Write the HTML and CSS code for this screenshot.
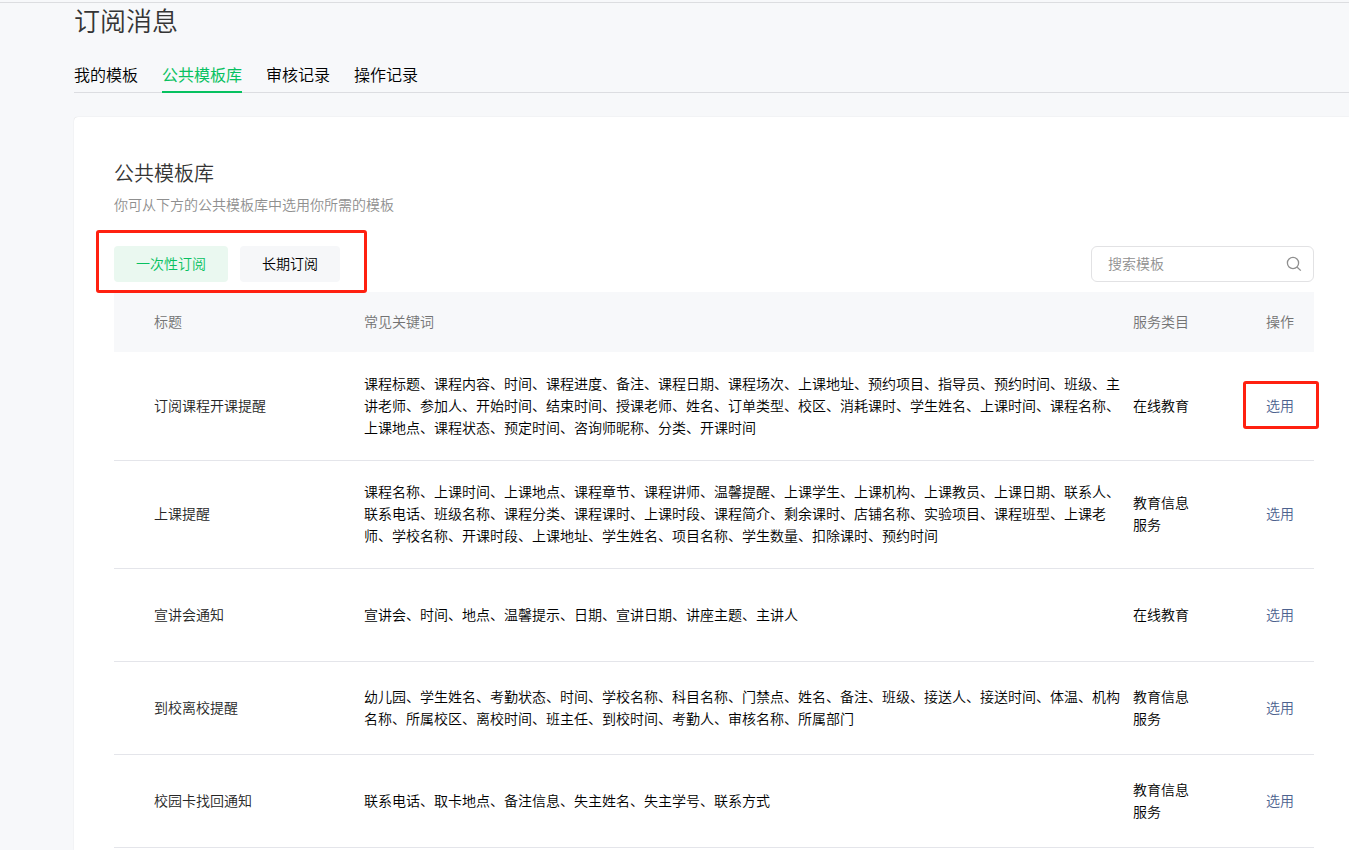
FILE: index.html
```html
<!DOCTYPE html>
<html lang="zh-CN">
<head>
<meta charset="utf-8">
<meta name="viewport" content="width=device-width, initial-scale=1">
<title>订阅消息</title>
<link rel="stylesheet" href="styles.css">
</head>
<body>
<main class="page">
  <h1 class="page-title">订阅消息</h1>
  <nav class="tabs">
    <a class="tab" href="#mine">我的模板</a>
    <a class="tab tab-active" href="#library" aria-current="page">公共模板库</a>
    <a class="tab" href="#review">审核记录</a>
    <a class="tab" href="#history">操作记录</a>
  </nav>
  <section class="card">
    <h2 class="card-title">公共模板库</h2>
    <p class="card-desc">你可从下方的公共模板库中选用你所需的模板</p>
    <div class="toolbar">
      <div class="types marked">
        <button class="type type-active" type="button">一次性订阅</button>
        <button class="type" type="button">长期订阅</button>
      </div>
      <form class="search">
        <input class="search-input" type="text" placeholder="搜索模板" aria-label="搜索模板">
        <button class="search-button" type="submit" aria-label="搜索">
          <svg class="search-icon" viewBox="0 0 16 16" aria-hidden="true"><circle cx="7" cy="7" r="5.6"/><path d="M11.2 11.2l3.6 3.4"/></svg>
        </button>
      </form>
    </div>
    <table class="table">
      <colgroup><col class="col-title"><col><col class="col-category"><col class="col-action"></colgroup>
      <thead>
        <tr><th>标题</th><th>常见关键词</th><th>服务类目</th><th>操作</th></tr>
      </thead>
      <tbody>
        <tr>
          <td>订阅课程开课提醒</td>
          <td>课程标题、课程内容、时间、课程进度、备注、课程日期、课程场次、上课地址、预约项目、指导员、预约时间、班级、主讲老师、参加人、开始时间、结束时间、授课老师、姓名、订单类型、校区、消耗课时、学生姓名、上课时间、课程名称、上课地点、课程状态、预定时间、咨询师昵称、分类、开课时间</td>
          <td>在线教育</td>
          <td><a class="pick marked" href="#pick">选用</a></td>
        </tr>
        <tr>
          <td>上课提醒</td>
          <td>课程名称、上课时间、上课地点、课程章节、课程讲师、温馨提醒、上课学生、上课机构、上课教员、上课日期、联系人、联系电话、班级名称、课程分类、课程课时、上课时段、课程简介、剩余课时、店铺名称、实验项目、课程班型、上课老师、学校名称、开课时段、上课地址、学生姓名、项目名称、学生数量、扣除课时、预约时间</td>
          <td>教育信息服务</td>
          <td><a class="pick" href="#pick">选用</a></td>
        </tr>
        <tr>
          <td>宣讲会通知</td>
          <td>宣讲会、时间、地点、温馨提示、日期、宣讲日期、讲座主题、主讲人</td>
          <td>在线教育</td>
          <td><a class="pick" href="#pick">选用</a></td>
        </tr>
        <tr>
          <td>到校离校提醒</td>
          <td>幼儿园、学生姓名、考勤状态、时间、学校名称、科目名称、门禁点、姓名、备注、班级、接送人、接送时间、体温、机构名称、所属校区、离校时间、班主任、到校时间、考勤人、审核名称、所属部门</td>
          <td>教育信息服务</td>
          <td><a class="pick" href="#pick">选用</a></td>
        </tr>
        <tr>
          <td>校园卡找回通知</td>
          <td>联系电话、取卡地点、备注信息、失主姓名、失主学号、联系方式</td>
          <td>教育信息服务</td>
          <td><a class="pick" href="#pick">选用</a></td>
        </tr>
      </tbody>
    </table>
  </section>
</main>
</body>
</html>
```
FILE: styles.css
```css
* {
  box-sizing: border-box;
}

body {
  margin: 0;
  background: #f7f8fa;
  color: #000;
  font: 350 14px/22px "Noto Sans CJK SC", sans-serif;
}

button,
input {
  font: inherit;
}

a {
  color: inherit;
  text-decoration: none;
}

.page {
  display: flex;
  flex-direction: column;
  min-height: 100vh;
  padding: 2px 0 0 74px;
  background: linear-gradient(#dcdde0, #dcdde0) 0 2px / 100% 1px no-repeat;
}

.page-title {
  margin: 0;
  color: #353535;
  font-size: 26px;
  font-weight: 350;
  line-height: 36px;
}

.tabs {
  display: flex;
  gap: 24px;
  margin-top: 20px;
  border-bottom: 1px solid #dcdde1;
  font-size: 16px;
  line-height: 24px;
}

.tab {
  margin-bottom: -1px;
  padding: 4px 0 5px;
  border-bottom: 2px solid transparent;
}

.tab-active {
  border-color: #07c160;
  color: #07c160;
  font-weight: 400;
}

.card {
  flex: 1;
  margin-top: 24px;
  padding: 40px 35px 0 40px;
  border-radius: 4px 0 0 0;
  background: #fff;
  box-shadow: 0 0 1px rgba(0, 0, 0, 0.2);
}

.card-title {
  margin: 0;
  color: #353535;
  font-size: 20px;
  font-weight: 350;
  line-height: 32px;
}

.card-desc {
  margin: 4px 0 0;
  color: #8f8f8f;
}

.toolbar {
  display: flex;
  justify-content: space-between;
  margin: 31px 0 10px;
}

.types {
  display: flex;
  gap: 12px;
}

.type {
  height: 36px;
  padding: 0 22px 2px;
  border: 0;
  border-radius: 4px;
  background: #f6f7f9;
  color: #000;
}

.type-active {
  background: #eaf8f0;
  color: #07c160;
}

.marked {
  position: relative;
}

.marked::after {
  content: "";
  position: absolute;
  border: 3px solid #ff2010;
  border-radius: 3px;
  pointer-events: none;
}

.types.marked::after {
  inset: -16px -27px -11px -18px;
}

.pick.marked::after {
  inset: -13px -25px -13px -23px;
}

.search {
  display: flex;
  align-items: center;
  width: 223px;
  height: 36px;
  padding: 0 11px 0 16px;
  border: 1px solid #e2e2e4;
  border-radius: 6px;
}

.search-input {
  flex: 1;
  min-width: 0;
  padding: 0 0 2px;
  border: 0;
  outline: 0;
  background: none;
}

.search-input::placeholder {
  color: #8f8f8f;
}

.search-button {
  display: flex;
  padding: 0;
  border: 0;
  background: none;
}

.search-icon {
  width: 16px;
  height: 16px;
  fill: none;
  stroke: #8f8f8f;
  stroke-width: 1.3;
}

.table {
  width: 100%;
  border-collapse: separate;
  border-spacing: 0;
  table-layout: fixed;
}

.col-title {
  width: 250px;
}

.col-category {
  width: 98px;
}

.col-action {
  width: 83px;
}

.table th {
  height: 61px;
  padding: 0 0 2px;
  border-bottom: 1px solid #fff;
  background: #f7f8fa;
  color: #737373;
  font-weight: 350;
  text-align: left;
}

.table td {
  height: 93px;
  padding: 19px 12px 22px 0;
  border-bottom: 1px solid #e4e5ea;
  vertical-align: middle;
}

.table tr > :nth-child(1) {
  padding-left: 40px;
}

.table td:nth-child(1) {
  color: #262626;
}

.table td:nth-child(3) {
  padding-right: 40px;
}

.table tr > :nth-child(4) {
  padding-right: 20px;
  text-align: right;
}

.pick {
  display: inline-block;
  color: #4d628f;
}
```
